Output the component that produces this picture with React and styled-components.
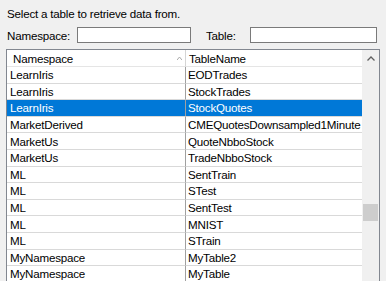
import React from "react";
import styled, { createGlobalStyle } from "styled-components";

const GlobalStyle = createGlobalStyle`
  html, body {
    margin: 0;
    padding: 0;
    background: #f0f0f0;
    overflow: hidden;
  }
  body {
    font-family: "Liberation Sans", Arial, sans-serif;
    font-size: 11.6px;
    letter-spacing: -0.2px;
    color: #000;
  }
`;

const Page = styled.div`
  width: 386px;
  height: 281px;
  padding: 6px 0 0 6px;
  box-sizing: border-box;
  overflow: hidden;
`;

const Prompt = styled.div`
  line-height: 15px;
  padding-left: 1px;
`;

const FilterRow = styled.div`
  display: flex;
  align-items: center;
  margin-top: 6px;
  height: 16px;
`;

const Label = styled.label`
  width: ${props => props.width}px;
  padding-left: ${props => props.indent || 0}px;
  box-sizing: border-box;
  flex: none;
`;

const Input = styled.input`
  width: ${props => props.width}px;
  height: 16px;
  box-sizing: border-box;
  border: 1px solid #7a7a7a;
  background: #fff;
  padding: 0 2px;
  margin: 0;
  outline: none;
  flex: none;
  font: inherit;
`;

const Gap = styled.div`
  width: ${props => props.width}px;
  flex: none;
`;

const Grid = styled.div`
  margin-top: 6px;
  width: 374px;
  height: 250px;
  box-sizing: border-box;
  border: 1px solid #828790;
  background: #fff;
  display: flex;
`;

const Table = styled.div`
  flex: 1;
  display: grid;
  grid-template-columns: 179px 176px;
  grid-auto-rows: 16.6px;
  grid-template-rows: 17px;
  align-content: start;
`;

const HeadCell = styled.div`
  position: relative;
  display: flex;
  align-items: center;
  padding-left: ${props => (props.first ? 6 : 3)}px;
  border-bottom: 1px solid #e5e5e5;
  border-right: ${props => (props.first ? "1px solid #d5d5d5" : "none")};
  white-space: nowrap;
`;

const SortGlyph = styled.svg`
  position: absolute;
  right: 3px;
  top: 7px;
`;

const Cell = styled.div`
  display: flex;
  align-items: center;
  padding-left: ${props => (props.first ? 3 : 2)}px;
  border-bottom: 1px solid #d9d9d9;
  border-right: ${props => (props.first ? "1px solid #a0a0a0" : "none")};
  background: ${props => (props.selected ? "#0078d7" : "#fff")};
  color: ${props => (props.selected ? "#fff" : "#000")};
  white-space: nowrap;
  overflow: hidden;
  box-sizing: border-box;
`;

const ScrollBar = styled.div`
  width: 17px;
  flex: none;
  background: #f0f0f0;
  display: flex;
  flex-direction: column;
`;

const ScrollButton = styled.div`
  height: 17px;
  display: flex;
  align-items: center;
  justify-content: center;
`;

const Track = styled.div`
  flex: 1;
  padding-top: ${props => props.offset}px;
  padding-left: 1px;
`;

const Thumb = styled.div`
  width: 15px;
  height: 17px;
  background: #cdcdcd;
`;

const rows = [
  ["LearnIris", "EODTrades"],
  ["LearnIris", "StockTrades"],
  ["LearnIris", "StockQuotes"],
  ["MarketDerived", "CMEQuotesDownsampled1Minute"],
  ["MarketUs", "QuoteNbboStock"],
  ["MarketUs", "TradeNbboStock"],
  ["ML", "SentTrain"],
  ["ML", "STest"],
  ["ML", "SentTest"],
  ["ML", "MNIST"],
  ["ML", "STrain"],
  ["MyNamespace", "MyTable2"],
  ["MyNamespace", "MyTable"],
  ["MyNamespace", "MyTable3"]
];

const selectedIndex = 2;

export default function App() {
  return (
    <Page>
      <GlobalStyle />
      <Prompt>Select a table to retrieve data from.</Prompt>
      <FilterRow>
        <Label width={71} indent={1}>Namespace:</Label>
        <Input width={114} />
        <Gap width={15} />
        <Label width={44}>Table:</Label>
        <Input width={127} />
      </FilterRow>
      <Grid>
        <Table>
          <HeadCell first>
            Namespace
            <SortGlyph width="5" height="3" viewBox="0 0 5 3">
              <path d="M0 3 L2.5 0 L5 3" fill="none" stroke="#a8a8a8" strokeWidth="1" />
            </SortGlyph>
          </HeadCell>
          <HeadCell>TableName</HeadCell>
          {rows.map(([ns, name], i) => (
            <React.Fragment key={i}>
              <Cell first selected={i === selectedIndex}>{ns}</Cell>
              <Cell selected={i === selectedIndex}>{name}</Cell>
            </React.Fragment>
          ))}
        </Table>
        <ScrollBar>
          <ScrollButton>
            <svg width="8" height="5" viewBox="0 0 8 5">
              <path d="M0.5 4.5 L4 1 L7.5 4.5" fill="none" stroke="#606060" strokeWidth="1.3" />
            </svg>
          </ScrollButton>
          <Track offset={137}>
            <Thumb />
          </Track>
        </ScrollBar>
      </Grid>
    </Page>
  );
}
